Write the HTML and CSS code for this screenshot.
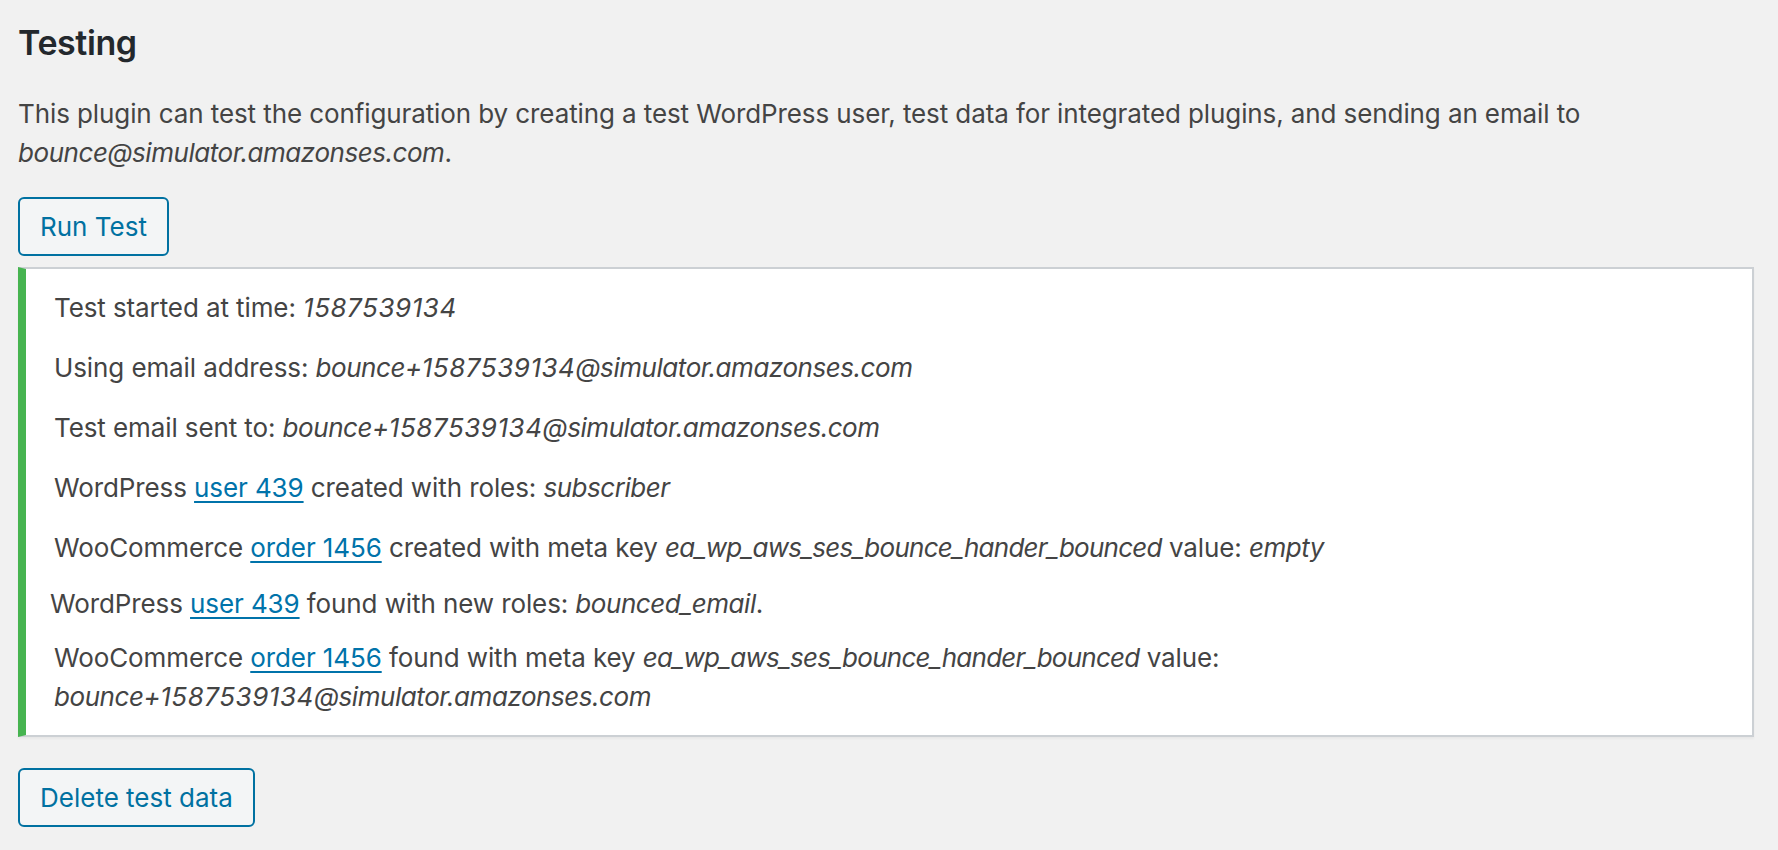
FILE: index.html
```html
<!DOCTYPE html>
<html lang="en">
<head>
<meta charset="utf-8">
<title>Testing</title>
<link rel="stylesheet" href="styles.css">
</head>
<body>
<div class="wrap">
  <h2 class="title">Testing</h2>
  <p class="desc">This plugin can test the configuration by creating a test WordPress user, test data for integrated plugins, and sending an email to <em>bounce@simulator.amazonses.com</em>.</p>
  <button class="button" type="button">Run Test</button>
  <div class="notice">
    <p>Test started at time: <em><span class="digits">1587539134</span></em></p>
    <p>Using email address: <em>bounce+<span class="digits">1587539134</span>@simulator.amazonses.com</em></p>
    <p>Test email sent to: <em>bounce+<span class="digits">1587539134</span>@simulator.amazonses.com</em></p>
    <p>WordPress <a href="#">user 439</a> created with roles: <em>subscriber</em></p>
    <p>WooCommerce <a href="#">order 1456</a> created with meta key <em class="key">ea_wp_aws_ses_bounce_hander_bounced</em> value: <em>empty</em></p>
    <div class="plain">WordPress <a href="#">user 439</a> found with new roles: <em>bounced_email</em>.</div>
    <p class="after-plain">WooCommerce <a href="#">order 1456</a> found with meta key <em class="key">ea_wp_aws_ses_bounce_hander_bounced</em> value: <em>bounce+<span class="digits">1587539134</span>@simulator.amazonses.com</em></p>
  </div>
  <button class="button button-delete" type="button">Delete test data</button>
</div>
</body>
</html>
```

FILE: styles.css
```css
html, body {
  margin: 0;
  padding: 0;
  background: #f1f1f1;
}

body {
  font-family: Inter, "Noto Sans", "Liberation Sans", sans-serif;
  font-size: 26px;
  line-height: 39px;
  letter-spacing: -0.1px;
  color: #444;
}

.wrap {
  padding: 0 24px 0 18px;
}

.title {
  margin: 21px 0 29px;
  font-size: 34px;
  line-height: 44px;
  font-weight: 600;
  letter-spacing: -0.4px;
  color: #23282d;
}

.desc {
  margin: 0 0 25px;
}

em {
  font-style: italic;
  letter-spacing: -0.45px;
}

em .digits {
  letter-spacing: 0.55px;
}

em.key {
  letter-spacing: -0.75px;
}

.button {
  display: inline-block;
  font-family: inherit;
  font-size: 26px;
  line-height: 55px;
  letter-spacing: 0;
  padding: 0 20px;
  border: 2px solid #0071a1;
  border-radius: 6px;
  background: #f3f5f6;
  color: #0071a1;
  cursor: pointer;
  vertical-align: top;
}

.notice {
  margin: 11px 0 0;
  background: #fff;
  border: 2px solid #ccd0d4;
  border-left: 8px solid #46b450;
  box-shadow: 0 2px 2px rgba(0, 0, 0, 0.04);
  padding: 2px 24px;
}

.notice p {
  margin: 13px 0;
  padding: 4px;
}

.notice p.after-plain {
  margin-top: 11px;
}

.notice .plain {
  padding: 0;
}

.notice a {
  color: #0073aa;
  text-decoration: underline;
  text-decoration-thickness: 2px;
  text-underline-offset: 4px;
}

.button-delete {
  margin-top: 31px;
}
```
